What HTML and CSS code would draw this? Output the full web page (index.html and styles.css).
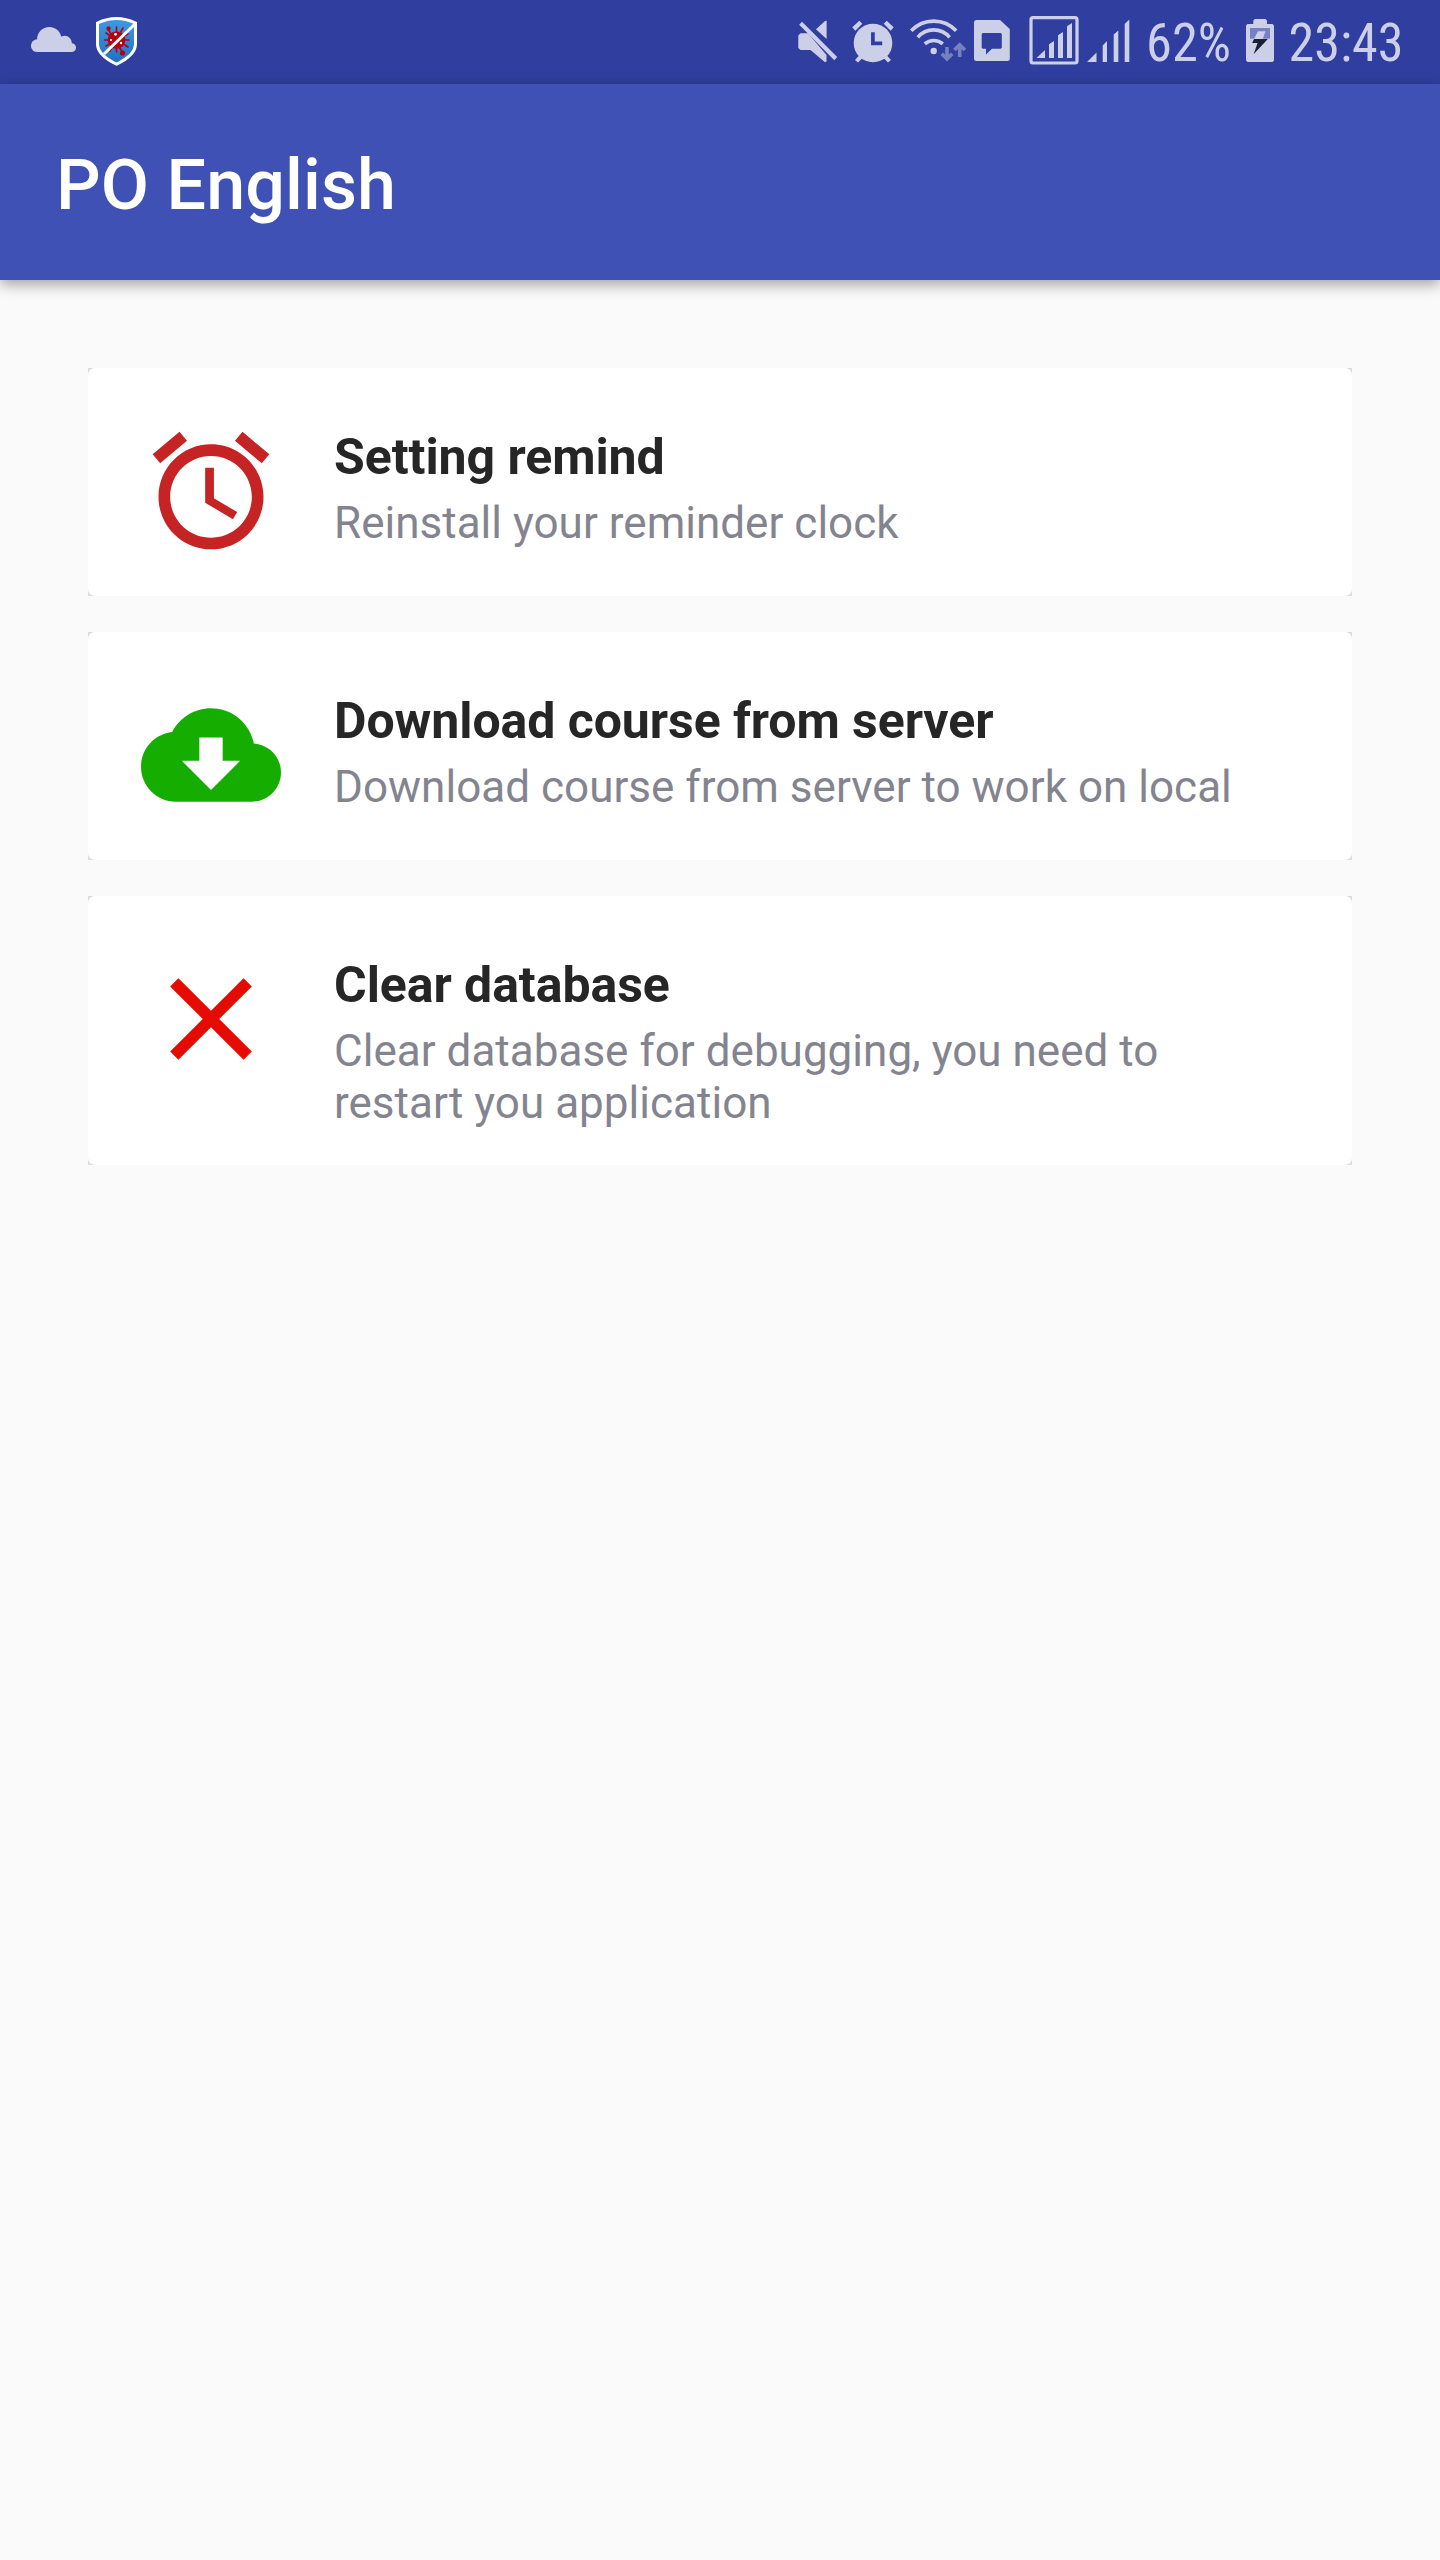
FILE: index.html
```html
<!DOCTYPE html>
<html lang="en">
<head>
<meta charset="utf-8">
<title>PO English</title>
<link rel="stylesheet" href="styles.css">
</head>
<body>
<header class="status">
  <svg class="status-icons" width="160" height="84" viewBox="0 0 160 84">
    <defs>
      <linearGradient id="shield" x1="0" y1="0" x2="0" y2="1"><stop offset="0" stop-color="#3f9be2"/><stop offset="1" stop-color="#2270c2"/></linearGradient>
    </defs>
    <g class="tint">
      <circle cx="37.3" cy="45.7" r="6.4"/><circle cx="49.3" cy="39.2" r="12.2"/><circle cx="64.7" cy="43" r="7.2"/><circle cx="71.6" cy="47.7" r="4.4"/>
      <path d="M37 40H62L72 46V52.1H37Z"/>
    </g>
    <path d="M97.500 23Q107 18.600 116.500 18.600Q126 18.600 135.500 23V44Q135.500 55 116.500 64.200Q97.500 55 97.500 44Z" fill="url(#shield)" stroke="#fff" stroke-width="3"/>
    <g stroke="#b80010" stroke-width="1.600" fill="#b80010" stroke-linecap="round">
      <circle cx="116.500" cy="40" r="8"/>
      <path d="M116.500 27V52M104.500 40H129M108 29L123 53M123 28L110 51M106 33L128 47M128 34L106 46"/>
      <circle cx="108.500" cy="28.500" r="1.400"/><circle cx="122.500" cy="53" r="1.800"/>
    </g>
    <g fill="#fff"><circle cx="115.500" cy="34.300" r="1.400"/><circle cx="111" cy="40" r="1.100"/><circle cx="121" cy="43" r="1.200"/></g>
    <path d="M104 54L135 24" stroke="#fff" stroke-width="3"/>
  </svg>
  <svg class="status-icons right" width="350" height="84" viewBox="790 0 350 84">
    <g class="tint">
      <path d="M798.300 35.500L800.500 33.300H808L826.500 55V61.500L825 62.300L810.500 50H800.500L798.300 48Z"/>
      <path d="M799.200 24.800L802 21.700L837.200 57L834.300 60.300Z"/>
      <path d="M816 29.300L825 21L826.600 20.700V39Z"/>
    </g>
    <g class="tint">
      <circle cx="873" cy="43" r="19.300"/>
      <path d="M852.300 27.300L859.300 20.700L862.300 23.700L855.300 30.700ZM893.700 27.300L886.700 20.700L883.700 23.700L890.700 30.700Z"/>
      <path d="M855 60L860 54.500L863 57.500L858 62.500ZM891 60L886 54.500L883 57.500L888 62.500Z"/>
    </g>
    <path class="cut-line" d="M872.900 32.300V43.300H882.200"/>
    <g class="line" stroke-width="3.600">
      <path d="M911.200 30.800A30.900 30.900 0 0 1 956.200 30.800M917.800 37.300A20.700 20.700 0 0 1 949.600 37.300M924.800 43.900A13.500 13.500 0 0 1 942.800 43.900"/>
    </g>
    <circle class="tint" cx="933.700" cy="51" r="3.200"/>
    <g class="dim-line">
      <path d="M947 47V59M941.800 53.800L947 59L952.200 53.800M959.700 57V45M954.500 50L959.700 44.800L964.900 50"/>
    </g>
    <path class="tint" d="M976.500 20H1000L1009.800 29V58.500Q1009.800 61 1007.300 61H976.500Q974 61 974 58.500V22.500Q974 20 976.500 20Z"/>
    <path class="cut" d="M982.700 33H1000.700L1001.800 34V47.700L1000.700 48.700H992L986 54.500V48.700H982.700L981.700 47.700V34Z"/>
    <rect class="line" x="1031" y="17.700" width="46" height="45.300" rx="2" stroke-width="3.200"/>
    <path class="tint" d="M1036.500 58L1045 50V58ZM1049 58V44.300L1054 41V58ZM1058 58V35.300L1063 32V58ZM1067 58V26.300L1072 23V58Z"/>
    <path class="tint" d="M1087 62L1096.500 52.500V62ZM1102.700 62V45.500L1107 41V62ZM1113.700 62V34.500L1118.300 30.500V62ZM1124.700 62V24L1129.300 19.500V62Z"/>
  </svg>
  <svg class="status-icons" width="300" height="84" viewBox="1140 0 300 84">
    <text class="status-text" x="1146" y="61.300" textLength="85" lengthAdjust="spacingAndGlyphs">62%</text>
    <path class="tint" d="M1253.300 24V20.500L1254.800 19H1265.500L1267 20.500V24H1272.500L1274 25.500V60.500L1272.500 62H1247.500L1246 60.500V25.500L1247.500 24Z"/>
    <path fill="#7681c4" d="M1250 28H1270V38.700H1250Z"/>
    <path class="tint" d="M1258 31.300H1265.500L1262.700 39H1254Z"/>
    <path fill="#1b2036" d="M1254 39H1267.800L1253.600 54.300L1257.600 43H1252.200Z"/>
    <text class="status-text" x="1288.500" y="61.300" textLength="115" lengthAdjust="spacingAndGlyphs">23:43</text>
  </svg>
</header>
<div class="appbar"><h1 class="appbar-title">PO English</h1></div>
<main class="list">
  <section class="card"><div class="card-body">
    <svg class="card-icon" viewBox="0 0 24 24" fill="#c62424"><path d="M22 5.720l-4.600-3.860-1.290 1.530 4.600 3.860L22 5.720zM7.880 3.390L6.600 1.860 2 5.710l1.290 1.530 4.590-3.850zM12.500 8H11v6l4.750 2.850.75-1.230-4-2.370V8zM12 4c-4.970 0-9 4.030-9 9s4.020 9 9 9c4.970 0 9-4.030 9-9s-4.030-9-9-9zm0 16c-3.870 0-7-3.130-7-7s3.130-7 7-7 7 3.130 7 7-3.130 7-7 7z"/></svg>
    <div class="card-text">
      <h2 class="card-title">Setting remind</h2>
      <p class="card-sub">Reinstall your reminder clock</p>
    </div>
  </div></section>
  <section class="card"><div class="card-body">
    <svg class="card-icon" viewBox="0 0 24 24" fill="#15ae00"><path d="M19.350 10.040C18.670 6.590 15.640 4 12 4 9.110 4 6.600 5.640 5.350 8.040 2.340 8.360 0 10.910 0 14c0 3.310 2.690 6 6 6h13c2.760 0 5-2.240 5-5 0-2.640-2.050-4.780-4.650-4.960zM17 13l-5 5-5-5h3V9h4v4h3z"/></svg>
    <div class="card-text">
      <h2 class="card-title">Download course from server</h2>
      <p class="card-sub">Download course from server to work on local</p>
    </div>
  </div></section>
  <section class="card card-tall"><div class="card-body">
    <svg class="card-icon" viewBox="0 0 24 24" fill="#e60b00"><path d="M19 6.410L17.590 5 12 10.590 6.410 5 5 6.410 10.590 12 5 17.590 6.410 19 12 13.410 17.590 19 19 17.590 13.410 12z"/></svg>
    <div class="card-text">
      <h2 class="card-title">Clear database</h2>
      <p class="card-sub">Clear database for debugging, you need to restart you application</p>
    </div>
  </div></section>
</main>
</body>
</html>
```
FILE: styles.css
```css
* { box-sizing: border-box; }
body { margin: 0; min-height: 2560px; background: #fafafa; font-family: Roboto, "Liberation Sans", sans-serif; }
h1, h2, p { margin: 0; }
.status { display: flex; height: 84px; background: #303f9f; }
.status-icons { display: block; flex: none; }
.right { margin-left: auto; }
.tint { fill: #cbcfe7; }
.cut { fill: #303f9f; }
.cut-line { fill: none; stroke: #303f9f; stroke-width: 3.7; }
.line { fill: none; stroke: #cbcfe7; }
.dim-line { fill: none; stroke: #7681c4; stroke-width: 3.6; }
.status-text { fill: #cbcfe7; font-family: "Roboto Condensed", Roboto, sans-serif; font-size: 53.5px; }
.appbar { height: 196px; padding: 57px 56px 0; background: #3f51b5; box-shadow: 0 4px 14px rgba(0, 0, 0, .38); }
.appbar-title { font-size: 70px; font-weight: 500; line-height: 88px; letter-spacing: .1px; color: #fff; white-space: nowrap; }
.list { display: flex; flex-direction: column; gap: 36px; padding: 88px 88px 0; }
.card { height: 228px; background: #dcdcdc; }
.card-tall { height: 269px; }
.card-body { display: flex; gap: 53.5px; height: 100%; padding: 52.5px 52.5px 0; border-radius: 7px; background: #fff; }
.card-icon { flex: none; width: 140px; height: 140px; }
.card-text { flex: 1; padding: 6.5px 52px 0 0; }
.card-title { font-size: 50px; font-weight: 700; line-height: 60px; letter-spacing: -.06px; color: #262626; white-space: nowrap; }
.card-sub { padding-top: 10px; font-size: 44px; line-height: 52px; letter-spacing: .02px; color: #84848f; }
```
